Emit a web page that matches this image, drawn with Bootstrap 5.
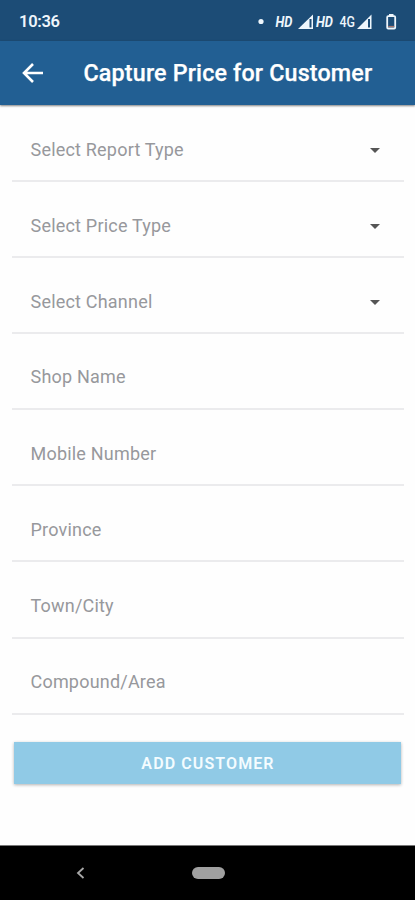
<!DOCTYPE html>
<html lang="en">
<head>
<meta charset="utf-8">
<meta name="viewport" content="width=device-width, initial-scale=1">
<title>Capture Price for Customer</title>
<link href="https://cdn.jsdelivr.net/npm/bootstrap@5.3.0/dist/css/bootstrap.min.css" rel="stylesheet">
<style>
body{font-family:Roboto,"Liberation Sans",sans-serif;background:#fefefe;overflow:hidden}
.screen{height:900px}
.status-bar{height:41px;background:#1c4c76;padding:2px 17px 0 19px;font-size:16.5px;font-weight:600;color:#eef6fc;letter-spacing:-.3px}
.clock{padding-top:1px}
.app-bar{height:64px;background:#225f93;box-shadow:0 1px 2px rgba(0,0,0,.5);padding-left:22px}
.app-bar h1{font-size:23.3px;font-weight:500;margin-left:39.5px;padding-top:2px;letter-spacing:.16px;-webkit-text-stroke:.25px #fff}
.fields{padding:0 11px 0 12px}
.field{height:76.2px;border-bottom:2px solid #ebebed;padding:14px 24px 0 18.5px;font-size:18px;color:#97989c;letter-spacing:.2px}
.field:first-child{height:76.5px;padding-top:15px}
.field svg{margin-top:2px}
.field-text{padding-top:12px}
.btn-add{height:42px;margin:27.5px 14px 0;width:387px;padding:1px 0 0 1px;background:#90cae6;color:#f4fcff;font-size:16px;font-weight:600;letter-spacing:1.1px;box-shadow:0 1px 3px rgba(0,0,0,.3)}
.nav-keys{height:55px;background:#000;border-top:1px solid #777}
.nav-keys svg{margin-left:76px}
.home-pill{width:33px;height:12px;background:#a0a0a0;margin-left:106.5px}
</style>
</head>
<body>
<div class="screen d-flex flex-column">
  <header>
    <div class="status-bar d-flex align-items-center justify-content-between">
      <span class="clock">10:36</span>
      <svg width="142" height="20" viewBox="256 11 142 20" fill="#eef6fc" font-family="Roboto, sans-serif" letter-spacing="0">
        <circle cx="261" cy="20.500" r="2.600"/>
        <text x="275.500" y="25.500" font-size="14.500" font-weight="700" font-style="italic" textLength="17" lengthAdjust="spacingAndGlyphs">HD</text>
        <path d="M298 28 313 13.500V28Z"/><path d="M310.500 18v8.500" stroke="#1c4c76" stroke-width="2"/>
        <text x="316" y="25.500" font-size="14.500" font-weight="700" font-style="italic" textLength="17" lengthAdjust="spacingAndGlyphs">HD</text>
        <text x="339.500" y="26" font-size="14.500" font-weight="500" textLength="15.500" lengthAdjust="spacingAndGlyphs">4G</text>
        <path d="M357 28 371.500 13.500V28Z"/><path d="M369 18v8.500" stroke="#1c4c76" stroke-width="2"/>
        <rect x="387.200" y="15.200" width="8" height="12.300" rx="1" fill="none" stroke="#eef6fc" stroke-width="1.800"/><path d="M389 13h4.500v2H389z"/><path d="M388.200 25.500h6" stroke="#a8776f" stroke-width="1.200"/>
      </svg>
    </div>
    <nav class="app-bar d-flex align-items-center text-white position-relative">
      <svg width="22" height="22" viewBox="0 0 22 22" fill="none" stroke="#fff" stroke-width="2.600"><path d="M21 11H2.500M11 2 2 11l9 9"/></svg>
      <h1 class="mb-0">Capture Price for Customer</h1>
    </nav>
  </header>
  <main class="flex-grow-1">
    <div class="fields">
      <div class="field d-flex align-items-center justify-content-between">Select Report Type<svg width="10" height="5"><path d="M0 0h10L5 5z" fill="#555"/></svg></div>
      <div class="field d-flex align-items-center justify-content-between">Select Price Type<svg width="10" height="5"><path d="M0 0h10L5 5z" fill="#555"/></svg></div>
      <div class="field d-flex align-items-center justify-content-between">Select Channel<svg width="10" height="5"><path d="M0 0h10L5 5z" fill="#555"/></svg></div>
      <div class="field field-text d-flex align-items-center">Shop Name</div>
      <div class="field field-text d-flex align-items-center">Mobile Number</div>
      <div class="field field-text d-flex align-items-center">Province</div>
      <div class="field field-text d-flex align-items-center">Town/City</div>
      <div class="field field-text d-flex align-items-center">Compound/Area</div>
    </div>
    <button type="button" class="btn btn-add border-0 rounded-0">ADD CUSTOMER</button>
  </main>
  <footer class="nav-keys d-flex align-items-center">
    <svg width="9" height="12" viewBox="0 0 9 12" fill="none" stroke="#a8a8a8" stroke-width="1.800"><path d="M7.500 1 2 6l5.500 5"/></svg>
    <span class="home-pill rounded-pill"></span>
  </footer>
</div>
<script src="https://cdn.jsdelivr.net/npm/bootstrap@5.3.0/dist/js/bootstrap.bundle.min.js"></script>
</body>
</html>
